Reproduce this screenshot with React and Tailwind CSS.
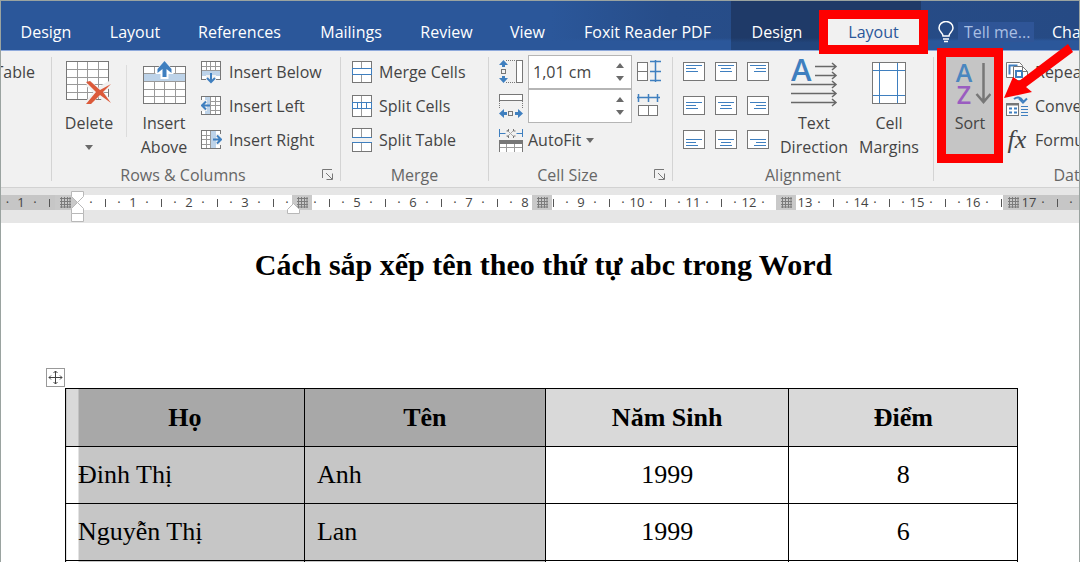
import { useState } from "react"

// Main ribbon tabs, left to right
const tabs = [
  { name: "Design", width: "w-[90px]" },
  { name: "Layout", width: "w-[88px]" },
  { name: "References", width: "w-[121px]" },
  { name: "Mailings", width: "w-[102px]" },
  { name: "Review", width: "w-[89px]" },
  { name: "View", width: "w-[73px]" },
  { name: "Foxit Reader PDF", width: "w-[167px]" },
]

const students = [
  { last: "Đinh Thị", first: "Anh", year: "1999", score: "8" },
  { last: "Nguyễn Thị", first: "Lan", year: "1999", score: "6" },
  { last: "", first: "", year: "", score: "" },
]

// Centimetres shown on the ruler (null where an indent or column marker sits)
const rulerUnits = [1, null, 1, 2, 3, null, 5, 6, 7, 8, 9, 10, 11, 12, 13, 14, 15, 16, 17]

const GRAY = "#777777"
const BLUE = "#3f7fbf"

/* ---------- Icons ---------- */

// Plain table grid used by most of the icons
function Grid({ x = 0, y = 0, w, h, xs = [], ys = [] }) {
  const inner =
    xs.map((v) => `M${x + v + 0.5} ${y}v${h}`).join("") +
    ys.map((v) => `M${x} ${y + v + 0.5}h${w}`).join("")
  return (
    <g fill="none">
      <rect x={x + 0.5} y={y + 0.5} width={w - 1} height={h - 1} fill="#fff" />
      <path d={inner} stroke="#9a9a9a" />
      <rect x={x + 0.5} y={y + 0.5} width={w - 1} height={h - 1} stroke={GRAY} />
    </g>
  )
}

function DeleteIcon() {
  return (
    <svg width="46" height="44" viewBox="0 0 46 44">
      <Grid w={43} h={39} xs={[11, 21, 32]} ys={[8, 16, 23, 31]} />
      <path d="M22 22L43 41M44 23Q31 30 23 42" stroke="#f1f1f1" strokeWidth="7" fill="none" />
      <path d="M20 21l4-1 10 9 11-6-8 8 8 11-11-8-9 9-5 0 10-12z" fill="#dc5a3a" />
    </svg>
  )
}

function InsertAboveIcon() {
  return (
    <svg width="43" height="44" viewBox="0 0 43 44">
      <Grid y={5} w={43} h={38} xs={[11, 21, 32]} ys={[7, 15, 23, 30]} />
      <rect x="1" y="13" width="41" height="7" fill="#bdd3e9" />
      <path d="M21.500 0l9 9v4h-5v5h-8v-5h-5v-4z" fill="#fff" />
      <path d="M21.500 0l7 8v4l-5-4v8h-4v-8l-5 4v-4z" fill={BLUE} />
    </svg>
  )
}

function InsertBelowIcon() {
  return (
    <svg width="21" height="24" viewBox="0 0 21 24">
      <Grid x={0} y={1} w={20} h={19} xs={[5, 9, 14]} ys={[5, 9, 14]} />
      <rect x="1" y="11" width="18" height="5" fill="#bdd3e9" />
      <path d="M5 15h10v9H5z" fill="#f1f1f1" />
      <path d="M10 13v8M6 18l4 4 4-4" stroke={BLUE} strokeWidth="2" fill="none" />
    </svg>
  )
}

function InsertLeftIcon() {
  return (
    <svg width="21" height="24" viewBox="0 0 21 24">
      <Grid x={0} y={2} w={20} h={19} xs={[5, 9, 14]} ys={[5, 9, 14]} />
      <rect x="4" y="3" width="5" height="17" fill="#bdd3e9" />
      <path d="M0 6h6v11H0z" fill="#f1f1f1" />
      <path d="M9 11.500H1.500M5 7.500l-4 4 4 4" stroke={BLUE} strokeWidth="2" fill="none" />
    </svg>
  )
}

function InsertRightIcon() {
  return (
    <svg width="21" height="24" viewBox="0 0 21 24">
      <Grid x={0} y={2} w={20} h={19} xs={[5, 9, 14]} ys={[5, 9, 14]} />
      <rect x="10" y="3" width="5" height="17" fill="#bdd3e9" />
      <path d="M15 6h6v11h-6z" fill="#f1f1f1" />
      <path d="M12 11.500h7.500M16 7.500l4 4-4 4" stroke={BLUE} strokeWidth="2" fill="none" />
    </svg>
  )
}

function MergeCellsIcon() {
  return (
    <svg width="20" height="24" viewBox="0 0 20 24">
      <Grid x={0} y={1} w={20} h={22} xs={[9]} />
      <rect x="0.500" y="8.500" width="19" height="6" fill="#fff" stroke={BLUE} />
    </svg>
  )
}

function SplitCellsIcon() {
  return (
    <svg width="20" height="24" viewBox="0 0 20 24">
      <Grid x={0} y={1} w={20} h={22} xs={[9]} />
      <rect x="0.500" y="8.500" width="19" height="6" fill="#fff" stroke={BLUE} />
      <path d="M5.500 8v7M9.500 8v7M14.500 8v7" stroke={BLUE} />
    </svg>
  )
}

function SplitTableIcon() {
  return (
    <svg width="20" height="24" viewBox="0 0 20 24">
      <Grid x={0} y={0} w={20} h={10} xs={[9]} />
      <Grid x={0} y={14} w={20} h={10} xs={[9]} />
      <path d="M0 9.500h20M0 14.500h20" stroke={BLUE} />
    </svg>
  )
}

function RowHeightIcon() {
  return (
    <svg width="24" height="26" viewBox="0 0 24 26" fill="none">
      <rect x="17.500" y="1.500" width="6" height="22" fill="#fff" stroke={GRAY} />
      <path d="M7 1.500h10M7 23.500h10" stroke={GRAY} strokeDasharray="1 1" />
      <rect x="2.500" y="10.500" width="4" height="4" stroke={GRAY} />
      <path d="M4.500 1l4.500 5H6v2H3V6H0zM4.500 24l4.500-5H6v-2H3v2H0z" fill={BLUE} />
    </svg>
  )
}

function ColumnWidthIcon() {
  return (
    <svg width="24" height="26" viewBox="0 0 24 26" fill="none">
      <rect x="0.500" y="1.500" width="23" height="6" fill="#fff" stroke={GRAY} />
      <path d="M0.500 8v8M23.500 8v8" stroke={GRAY} strokeDasharray="1 1" />
      <rect x="9.500" y="18.500" width="4" height="4" stroke={GRAY} />
      <path d="M0 20.500l5-4.500v3h3v3H5v3zM24 20.500l-5-4.500v3h-3v3h3v3z" fill={BLUE} />
    </svg>
  )
}

function DistributeRowsIcon() {
  return (
    <svg width="24" height="24" viewBox="0 0 24 24" fill="none">
      <rect x="0.500" y="2.500" width="10" height="18" fill="#fff" stroke={GRAY} />
      <path d="M0 11.500h11" stroke={GRAY} />
      <path d="M18.500 0v22M13 1.500h11M13 11.500h11M13 20.500h11" stroke={BLUE} strokeWidth="1.500" />
    </svg>
  )
}

function DistributeColumnsIcon() {
  return (
    <svg width="24" height="24" viewBox="0 0 24 24" fill="none">
      <rect x="1.500" y="11.500" width="19" height="10" fill="#fff" stroke={GRAY} />
      <path d="M11.500 11v11" stroke={GRAY} />
      <path d="M0 3.500h23M1.500 0v8M11.500 0v8M20.500 0v8" stroke={BLUE} strokeWidth="1.500" />
    </svg>
  )
}

function AutoFitIcon() {
  return (
    <svg width="24" height="24" viewBox="0 0 24 24" fill="none">
      <path d="M0.500 1v8M0.500 5.500h6M23.500 1v8M17.500 5.500h6" stroke={BLUE} />
      <path d="M8 2l7 7M15 2l-7 7" stroke="#aaa" />
      <path d="M9.500 1v2h-2M14.500 1v2h2M9.500 10V8h-2M14.500 10V8h2" stroke={GRAY} />
      <Grid x={0} y={12} w={24} h={13} xs={[7, 15]} ys={[7]} />
      <rect x="0" y="12" width="24" height="4" fill={GRAY} />
    </svg>
  )
}

// Page with text lines; h = left/center/right, v = top/middle/bottom
function AlignIcon({ h, v }) {
  const top = { top: 3, middle: 6, bottom: 9 }[v]
  const lengths = [16, 10, 12]
  return (
    <svg width="22" height="20" viewBox="0 0 22 20">
      <rect x="0.500" y="0.500" width="21" height="18" fill="#fff" stroke={GRAY} />
      {lengths.map((length, i) => {
        const x = { left: 3, center: 11 - length / 2, right: 19 - length }[h]
        return <rect key={i} x={x} y={top + i * 3} width={length} height="1" fill={BLUE} />
      })}
    </svg>
  )
}

function TextDirectionIcon() {
  const lines = [
    [24, 9],
    [24, 18],
    [0, 27],
    [0, 36],
    [0, 45],
  ]
  return (
    <svg width="47" height="50" viewBox="0 0 47 50">
      <text x="0" y="23" fontSize="31" fontWeight="600" fill={BLUE}>
        A
      </text>
      {lines.map(([x, y]) => (
        <path
          key={y}
          d={`M${x} ${y - 0.5}H45M41 ${y - 4}l4 3.500-4 3.500`}
          stroke="#686868"
          strokeWidth="1.500"
          fill="none"
        />
      ))}
    </svg>
  )
}

function CellMarginsIcon() {
  return (
    <svg width="34" height="42" viewBox="0 0 34 42" fill="none">
      <rect x="0.500" y="0.500" width="33" height="41" fill="#fff" stroke={GRAY} />
      <path d="M7.500 1v40M25.500 1v40M1 8.500h32M1 33.500h32" stroke={BLUE} />
    </svg>
  )
}

function SortIcon() {
  return (
    <svg width="42" height="44" viewBox="0 0 42 44">
      <text x="15" y="20" fontSize="25" fontWeight="600" textAnchor="middle" fill="#4a86bf">
        A
      </text>
      <text x="15" y="42" fontSize="25" fontWeight="600" textAnchor="middle" fill="#9a5cc0">
        Z
      </text>
      <path d="M34.500 1v39M27.500 32l7 8 7-8" stroke="#777" strokeWidth="2.500" fill="none" />
    </svg>
  )
}

function RepeatIcon() {
  return (
    <svg width="22" height="22" viewBox="0 0 22 22" fill="none">
      <path d="M0.500 1.500h13l3 3v12h-16z" fill="#fff" stroke={GRAY} />
      <path d="M3.500 13.500v-9h8" stroke={BLUE} strokeWidth="2" />
      <path d="M7.500 5.500h9l5 5v9h-14z" fill="#fff" stroke={GRAY} />
      <path d="M10 10h6v6h-6z" stroke={BLUE} strokeWidth="2" />
      <path d="M16.500 5.500v5h5" stroke={GRAY} />
    </svg>
  )
}

function ConvertIcon() {
  return (
    <svg width="22" height="22" viewBox="0 0 22 22" fill="none">
      <rect x="0.500" y="8.500" width="12" height="12" fill="#fff" stroke={GRAY} />
      <path d="M0.500 9.500h12" stroke={GRAY} strokeWidth="2" />
      <path d="M3 13.500h3M8 13.500h3M3 17.500h3M8 17.500h3" stroke={BLUE} strokeWidth="2" />
      <path d="M15 11.500h7M15 14.500h7M15 17.500h7M15 20.500h7" stroke={BLUE} />
      <path d="M8 4q5-4 9 2M13 3.500l4 4 4-4" stroke={BLUE} strokeWidth="2" />
    </svg>
  )
}

function FormulaIcon() {
  return (
    <span className="w-[22px] text-center font-['Liberation_Serif',serif] text-[26px] leading-6 italic">fx</span>
  )
}

function LightbulbIcon() {
  return (
    <svg width="16" height="22" viewBox="0 0 16 22" fill="none" stroke="#fff" strokeWidth="1.500">
      <path d="M5 15c0-3-4-4-4-8a7 6.500 0 0 1 14 0c0 4-4 5-4 8z" />
      <path d="M5 18h6M6 20.500h4" />
    </svg>
  )
}

function Caret() {
  return (
    <svg width="8" height="5" viewBox="0 0 8 5">
      <path d="M0 0h8L4 5z" fill="#6a6a6a" />
    </svg>
  )
}

// Hatched column marker on the ruler
function ColumnMarker({ place }) {
  return (
    <span className={`absolute inset-y-0 flex w-5 items-center justify-center bg-[#c9c9c9] ${place}`}>
      <svg width="11" height="11" viewBox="0 0 11 11">
        <path
          d="M1.500 0v11M4.500 0v11M7.500 0v11M10 0v11M0 1.500h11M0 4.500h11M0 7.500h11M0 10h11"
          stroke="#7c7c7c"
        />
      </svg>
    </span>
  )
}

/* ---------- Ribbon pieces ---------- */

function Separator() {
  return <div className="my-1.5 w-px shrink-0 bg-[#d4d4d4]" />
}

// Ribbon group: content on top, caption below
function Group({ label, width, launcher, children }) {
  return (
    <section className={`flex shrink-0 flex-col ${width}`}>
      <div className="flex h-28 pt-1">{children}</div>
      <div className="flex h-6 items-center text-[#666]">
        <h2 className="flex-1 text-center">{label}</h2>
        {launcher && (
          <button aria-label={`${label} settings`} className="w-[26px] pl-2">
            <svg width="12" height="12" viewBox="0 0 12 12" fill="none" stroke={GRAY}>
              <path d="M0.500 9V0.500H10M4 4l6 6M10.500 4.500v6h-6" />
            </svg>
          </button>
        )}
      </div>
    </section>
  )
}

// Small button: icon with text at its right
function SmallButton({ icon, children }) {
  return (
    <button className="flex h-[34px] items-center gap-[7px] whitespace-nowrap">
      {icon}
      {children}
    </button>
  )
}

// Large button: icon over one or two lines of text
function LargeButton({ icon, width, children }) {
  return (
    <button className={`flex shrink-0 flex-col items-center ${width}`}>
      <span className="flex h-14 items-center">{icon}</span>
      {children}
    </button>
  )
}

function SizeField({ label, value }) {
  return (
    <div className="flex h-[34px] w-[104px] border border-[#b5b5b5] bg-white">
      <input aria-label={label} defaultValue={value} className="w-20 min-w-0 pl-1 text-[#444] outline-none" />
      <div className="flex flex-1 flex-col items-center justify-center gap-2">
        <button aria-label={`Increase ${label}`} className="rotate-180">
          <Caret />
        </button>
        <button aria-label={`Decrease ${label}`}>
          <Caret />
        </button>
      </div>
    </div>
  )
}

function Header() {
  const [active, setActive] = useState("Table Layout")

  return (
    <header className="flex h-[50px] shrink-0 border-b border-[#8faadc] bg-[linear-gradient(to_top,#2b579a_9px,transparent_12px),linear-gradient(to_right,#2b579a_51%,#274d89_62%,#264a84)] text-white">
      <nav className="flex shrink-0 items-center pt-[13px]">
        {tabs.map((tab) => (
          <button key={tab.name} onClick={() => setActive(tab.name)} className={`shrink-0 ${tab.width}`}>
            {tab.name}
          </button>
        ))}
      </nav>

      {/* Table tools tabs */}
      <div className="flex shrink-0 items-center gap-[5px] bg-linear-to-b from-[#1f3a68] from-75% to-[#22457b] to-85% pt-[13px] pr-[2px]">
        <button className="w-[92px]">Design</button>
        <button
          aria-pressed={active === "Table Layout"}
          onClick={() => setActive("Table Layout")}
          className="relative h-[26px] w-[91px] bg-[#f1f1f1] text-[#2b579a]"
        >
          Layout
          <span className="absolute -inset-[9px] z-10 border-[9px] border-[#fe0000]" />
        </button>
      </div>

      <div className="flex flex-1 items-center gap-1 pt-[13px] pl-[17px]">
        <LightbulbIcon />
        <input
          aria-label="Tell me"
          placeholder="Tell me..."
          className="h-5 w-[76px] shrink-0 bg-[#2f5597] pl-1.5 placeholder:text-[#a9bfe3]"
        />
        <span className="ml-[14px]">Cha</span>
      </div>
    </header>
  )
}

function Ribbon() {
  return (
    <div className="flex h-[137px] shrink-0 border-b border-[#d2d2d2] bg-[#f1f1f1] text-[#444]">
      <div className="flex w-[50px] shrink-0 justify-end overflow-hidden pt-1 pr-4">
        <SmallButton>Table</SmallButton>
      </div>
      <Separator />

      <Group label="Rows & Columns" width="w-[288px]" launcher>
        <LargeButton icon={<DeleteIcon />} width="w-[74px]">
          Delete
          <span className="flex h-6 items-center">
            <Caret />
          </span>
        </LargeButton>
        <div className="my-2.5 h-[72px] w-px bg-[#dcdcdc]" />
        <LargeButton icon={<InsertAboveIcon />} width="w-[74px]">
          <span>
            Insert
            <br />
            Above
          </span>
        </LargeButton>
        <div>
          <SmallButton icon={<InsertBelowIcon />}>Insert Below</SmallButton>
          <SmallButton icon={<InsertLeftIcon />}>Insert Left</SmallButton>
          <SmallButton icon={<InsertRightIcon />}>Insert Right</SmallButton>
        </div>
      </Group>
      <Separator />

      <Group label="Merge" width="w-[147px]">
        <div className="pl-[11px]">
          <SmallButton icon={<MergeCellsIcon />}>Merge Cells</SmallButton>
          <SmallButton icon={<SplitCellsIcon />}>Split Cells</SmallButton>
          <SmallButton icon={<SplitTableIcon />}>Split Table</SmallButton>
        </div>
      </Group>
      <Separator />

      <Group label="Cell Size" width="w-[183px]" launcher>
        <div className="pl-[10px]">
          <div className="flex items-center gap-[5px]">
            <RowHeightIcon />
            <SizeField label="Height" value="1,01 cm" />
            <button aria-label="Distribute Rows">
              <DistributeRowsIcon />
            </button>
          </div>
          <div className="flex items-center gap-[5px]">
            <ColumnWidthIcon />
            <SizeField label="Width" value="" />
            <button aria-label="Distribute Columns">
              <DistributeColumnsIcon />
            </button>
          </div>
          <button className="flex h-[34px] items-center gap-[5px]">
            <AutoFitIcon />
            AutoFit
            <Caret />
          </button>
        </div>
      </Group>
      <Separator />

      <Group label="Alignment" width="w-[260px]">
        <div className="grid h-[102px] grid-cols-3 place-items-center gap-x-[10px] pr-px pl-[10px]">
          {["top", "middle", "bottom"].map((v) =>
            ["left", "center", "right"].map((h) => (
              <button key={v + h} aria-label={`Align ${v} ${h}`}>
                <AlignIcon h={h} v={v} />
              </button>
            ))
          )}
        </div>
        <LargeButton icon={<TextDirectionIcon />} width="w-[88px]">
          <span>
            Text
            <br />
            Direction
          </span>
        </LargeButton>
        <LargeButton icon={<CellMarginsIcon />} width="w-[62px]">
          <span>
            Cell
            <br />
            Margins
          </span>
        </LargeButton>
      </Group>
      <Separator />

      <Group label="Data" width="w-[274px]">
        <button className="relative mt-[2px] ml-3 flex h-[97px] w-12 shrink-0 flex-col items-center bg-[#c5c5c5]">
          <span className="flex h-[54px] items-center">
            <SortIcon />
          </span>
          Sort
          <span className="absolute -inset-[9px] border-[9px] border-[#fe0000]" />
        </button>
        <div className="relative pl-3">
          <SmallButton icon={<RepeatIcon />}>Repeat Header Rows</SmallButton>
          <SmallButton icon={<ConvertIcon />}>Convert to Text</SmallButton>
          <SmallButton icon={<FormulaIcon />}>Formula</SmallButton>
          {/* Arrow pointing at the Sort button */}
          <svg className="absolute -top-3 left-2" width="72" height="58" viewBox="0 0 72 58">
            <path d="M66 1l5 8-47 35 6 5-28 6 9-21 6 4z" fill="#fe0000" />
          </svg>
        </div>
      </Group>
    </div>
  )
}

function Ruler() {
  return (
    <div className="h-[35px] shrink-0 bg-[#e6e6e6] pt-[7px]">
      <div className="relative flex h-[15px] text-[13px] leading-[15px] font-medium text-[#444]">
        {/* Margins in gray, writing area in white */}
        <div className="absolute inset-0 flex">
          <div className="w-[77px] bg-[#c6c6c6]" />
          <div className="flex-1 bg-white" />
          <div className="w-[74px] bg-[#c6c6c6]" />
        </div>

        <div className="relative flex min-w-0 overflow-hidden">
          <span className="w-[13px] shrink-0 text-center">·</span>
          {rulerUnits.map((n, i) => (
            <div key={i} className="flex w-14 shrink-0 items-center">
              <span className="flex w-3.5 justify-center">{n}</span>
              <span className="flex w-3.5 justify-center">·</span>
              <span className="flex w-3.5 justify-center">
                <i className="h-2 w-px bg-[#555]" />
              </span>
              <span className="flex w-3.5 justify-center">·</span>
            </div>
          ))}
        </div>

        <ColumnMarker place="left-[54px]" />
        <ColumnMarker place="left-[291px]" />
        <ColumnMarker place="left-[531px]" />
        <ColumnMarker place="left-[775px]" />
        <ColumnMarker place="left-[1002px]" />

        {/* Indent handles */}
        <svg className="absolute -top-1 left-[70px]" width="13" height="33" viewBox="0 0 13 33">
          <g fill="#fff" stroke="#b8b8b8">
            <path d="M0.500 0.500h12v5l-6 6-6-6z" />
            <path d="M0.500 22.500h12v-5l-6-6-6 6z" />
            <path d="M0.500 22.500h12v8h-12z" />
          </g>
        </svg>
        <svg className="absolute top-2 left-[286px]" width="13" height="12" viewBox="0 0 13 12">
          <path d="M0.500 10.500h12v-4l-6-6-6 6z" fill="#fff" stroke="#b8b8b8" />
        </svg>
      </div>
    </div>
  )
}

function Page() {
  return (
    <main className="flex-1 bg-white font-['Liberation_Serif',serif] text-black">
      <h1 className="pt-6 pl-[7px] text-center text-[30px] leading-9 font-bold">
        Cách sắp xếp tên theo thứ tự abc trong Word
      </h1>

      <div className="relative mt-[105px] mr-[61px] ml-[64px]">
        {/* Table move handle */}
        <button
          aria-label="Move table"
          className="absolute -top-5 -left-[19px] flex size-[19px] items-center justify-center border border-[#999] bg-white"
        >
          <svg width="15" height="15" viewBox="0 0 15 15" fill="none" stroke="#444">
            <path d="M7.500 1v13M1 7.500h13M5.500 3l2-2 2 2M5.500 12l2 2 2-2M3 5.500l-2 2 2 2M12 5.500l2 2-2 2" />
          </svg>
        </button>

        <table className="w-full table-fixed border-collapse text-[26px] leading-8 [&_td]:border [&_td]:border-black [&_th]:border [&_th]:border-black">
          <colgroup>
            <col className="w-[25.100%]" />
            <col className="w-[25.300%]" />
            <col className="w-[25.600%]" />
            <col className="w-[24%]" />
          </colgroup>
          <thead>
            <tr className="h-[58px]">
              <th className="bg-[linear-gradient(to_right,#d9d9d9_12px,#a8a8a8_12px)]">Họ</th>
              <th className="bg-[#a8a8a8]">Tên</th>
              <th className="bg-[#d9d9d9]">Năm Sinh</th>
              <th className="bg-[#d9d9d9]">Điểm</th>
            </tr>
          </thead>
          <tbody>
            {students.map((s, i) => (
              <tr key={i} className="h-[57px]">
                <td className="bg-[linear-gradient(to_right,#fff_12px,#c6c6c6_12px)] pl-3">{s.last}</td>
                <td className="bg-[#c6c6c6] pl-3">{s.first}</td>
                <td className="text-center">{s.year}</td>
                <td className="text-center">{s.score}</td>
              </tr>
            ))}
          </tbody>
        </table>
      </div>
    </main>
  )
}

export default function App() {
  return (
    <div className="flex h-screen flex-col overflow-hidden border-x border-t border-[#9aa3a0] font-['Open_Sans',sans-serif] text-base">
      <Header />
      <Ribbon />
      <Ruler />
      <Page />
    </div>
  )
}
